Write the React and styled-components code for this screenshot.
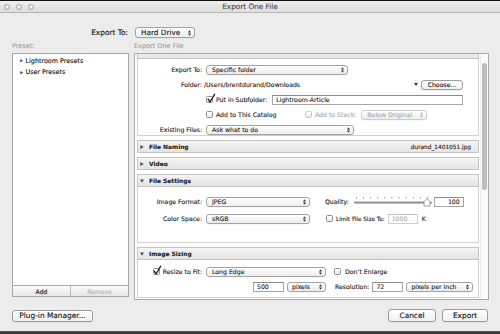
import React from 'react';
import styled, { createGlobalStyle } from 'styled-components';

const GlobalStyle = createGlobalStyle`
  html, body { margin: 0; padding: 0; width: 500px; height: 334px; overflow: hidden; background: #ececec; }
  body { font-family: "DejaVu Sans", Verdana, sans-serif; color: #1b1b1b; }
  * { box-sizing: border-box; }
`;

const Window = styled.div`
  width: 500px;
  height: 334px;
  display: flex;
  flex-direction: column;
  background: #ececec;
  -webkit-text-stroke: 0.12px currentColor;
`;

const TitleBar = styled.div`
  flex: none;
  height: 13px;
  display: grid;
  grid-template-columns: 1fr auto 1fr;
  align-items: center;
  border-top: 1px solid #111;
  border-bottom: 1px solid #b6b6b6;
  background: linear-gradient(#ededed, #dedede);
`;

const Lights = styled.div`
  display: flex;
  gap: 6px;
  padding-left: 4px;
`;

const Light = styled.span`
  width: 6px;
  height: 6px;
  border-radius: 50%;
  border: 1px solid #a8a8a8;
  background: radial-gradient(circle at 50% 40%, #fbfbfb, #d6d6d6);
`;

const Title = styled.div`
  font-size: 7.3px;
  color: #4d4d4d;
  white-space: nowrap;
`;

const DestRow = styled.div`
  flex: none;
  margin-top: 14px;
  height: 11px;
  display: grid;
  grid-template-columns: 117px auto;
  column-gap: 6px;
  padding-left: 12px;
  align-items: center;
`;

const DestLabel = styled.div`
  text-align: right;
  font-size: 7.4px;
  padding-right: 1px;
  color: #111;
`;

const Main = styled.div`
  flex: none;
  display: grid;
  grid-template-columns: 117px 355px;
  column-gap: 5px;
  padding-left: 12px;
`;

const Column = styled.div`
  display: flex;
  flex-direction: column;
`;

const PaneLabel = styled.div`
  margin-top: 4px;
  margin-bottom: 2px;
  height: 9px;
  line-height: 9px;
  font-size: 6.5px;
  color: #a3a3a3;
`;

const PresetList = styled.div`
  height: 233px;
  background: #fff;
  border: 1px solid #a7a7a7;
  padding: 1px 0 0 7px;
`;

const TreeItem = styled.div`
  height: 11.5px;
  display: flex;
  align-items: center;
  font-size: 6.4px;
  color: #111;
  gap: 2px;
`;

const ListButtons = styled.div`
  height: 11px;
  display: grid;
  grid-template-columns: 58px 1fr;
  border: 1px solid #a7a7a7;
  border-top: none;
`;

const ListBtn = styled.div`
  display: flex;
  align-items: center;
  justify-content: center;
  font-size: 6.1px;
  color: ${p => (p.$disabled ? '#b2b2b2' : '#111')};
  background: linear-gradient(#fbfbfb, #e7e7e7);
  border-right: ${p => (p.$first ? '1px solid #b8b8b8' : 'none')};
`;

const Panel = styled.div`
  height: 247px;
  display: flex;
  background: #fff;
  border: 1px solid #a9a9a9;
`;

const Scroller = styled.div`
  flex: 1;
  min-width: 0;
  display: flex;
  flex-direction: column;
  padding: 0 1px 0 2px;
  overflow: hidden;
`;

const ScrollTrack = styled.div`
  flex: none;
  width: 8px;
  border-left: 1px solid #ececec;
  background: #fafafa;
`;

const Thumb = styled.div`
  margin: 9px 0 0 1px;
  width: 5px;
  height: 127px;
  border-radius: 3px;
  background: #bdbdbd;
`;

const Remnant = styled.div`
  flex: none;
  height: 5px;
  border: 1px solid #c4c4c4;
  border-top: none;
  background: #e9e9e9;
`;

const SectionHeader = styled.div`
  flex: none;
  height: 13px;
  margin-top: 4px;
  display: flex;
  align-items: center;
  padding: 0 7px 0 2px;
  border: 1px solid #c4c4c4;
  background: linear-gradient(#f5f5f5, #e4e4e4);
  font-size: 5.9px;
  font-weight: bold;
  color: #222;
  gap: 5px;
`;

const HeaderAside = styled.span`
  margin-left: auto;
  font-weight: normal;
  font-size: 5.8px;
  color: #222;
`;

const SectionBody = styled.div`
  flex: none;
  display: flex;
  flex-direction: column;
  gap: ${p => p.$gap}px;
  padding: ${p => p.$pt}px 15px ${p => p.$pb}px 0;
  border: 1px solid #d2d2d2;
  border-top: none;
  background: #fff;
`;

const Row = styled.div`
  height: 11px;
  display: flex;
  align-items: center;
  font-size: 6.2px;
  white-space: nowrap;
`;

const Label = styled.div`
  flex: none;
  width: 64px;
  margin-right: 4px;
  display: flex;
  align-items: center;
  justify-content: flex-end;
  text-align: right;
`;

const Text = styled.span`
  flex: none;
  font-size: ${p => p.$size || 6.2}px;
  color: ${p => (p.$disabled ? '#a9a9a9' : '#1b1b1b')};
  margin-left: ${p => p.$ml || 0}px;
  margin-right: ${p => p.$mr || 0}px;
`;

const PopupBox = styled.div`
  flex: none;
  width: ${p => p.$w}px;
  height: ${p => p.$h || 10}px;
  margin-left: ${p => p.$ml || 0}px;
  display: flex;
  align-items: center;
  justify-content: space-between;
  padding: 0 3px 0 ${p => p.$pl || 5}px;
  border: 1px solid ${p => (p.$disabled ? '#cdcdcd' : '#a3a3a3')};
  border-radius: 3px;
  background: linear-gradient(#ffffff, #ededed);
  font-size: ${p => p.$size || 6.2}px;
  color: ${p => (p.$disabled ? '#ababab' : '#1b1b1b')};
  box-shadow: 0 0.5px 0 rgba(0, 0, 0, 0.06);
`;

const Field = styled.div`
  flex: ${p => (p.$grow ? 1 : 'none')};
  width: ${p => (p.$w ? `${p.$w}px` : 'auto')};
  height: 10px;
  margin-left: ${p => p.$ml || 0}px;
  display: flex;
  align-items: center;
  justify-content: ${p => (p.$right ? 'flex-end' : 'flex-start')};
  padding: 0 3px;
  background: #fff;
  border: 1px solid ${p => (p.$disabled ? '#d0d0d0' : '#a6a6a6')};
  border-top-color: ${p => (p.$disabled ? '#c4c4c4' : '#8c8c8c')};
  font-size: 6.2px;
  color: ${p => (p.$disabled ? '#b0b0b0' : '#1b1b1b')};
`;

const Button = styled.div`
  flex: none;
  width: ${p => p.$w}px;
  height: ${p => p.$h || 12}px;
  margin-left: ${p => p.$ml || 0}px;
  display: flex;
  align-items: center;
  justify-content: center;
  border: 1px solid #9d9d9d;
  border-radius: 3px;
  background: linear-gradient(#ffffff, #f0f0f0);
  box-shadow: 0 0.5px 0.5px rgba(0, 0, 0, 0.12);
  font-size: ${p => p.$size || 7.4}px;
  color: #111;
  white-space: nowrap;
`;

const Group = styled.div`
  flex: none;
  width: ${p => p.$w}px;
  margin-left: ${p => p.$ml || 0}px;
  display: flex;
  align-items: center;
  justify-content: ${p => (p.$end ? 'flex-end' : 'flex-start')};
  gap: ${p => p.$gap || 0}px;
`;

const BoxWrap = styled.span`
  position: relative;
  flex: none;
  width: 7px;
  height: 7px;
  margin-left: ${p => p.$ml || 0}px;
  margin-right: ${p => p.$mr ?? 3}px;
  border: 1px solid ${p => (p.$disabled ? '#cacaca' : '#8f8f8f')};
  border-radius: 1.5px;
  background: linear-gradient(#ffffff, #e8e8e8);
  svg { position: absolute; left: -0.5px; top: -3px; overflow: visible; }
`;

const Footer = styled.div`
  flex: none;
  margin-top: 9px;
  height: 13px;
  display: flex;
  align-items: center;
  padding: 0 12px;
`;

const Spacer = styled.div`
  flex: 1;
`;

const Desktop = styled.div`
  flex: none;
  margin-top: auto;
  height: 3px;
  background: linear-gradient(#5a5a5a, #262626);
`;

const SliderWrap = styled.svg`
  flex: none;
  margin-left: ${p => p.$ml}px;
  overflow: visible;
`;

const Arrows = ({ disabled }) => (
  <svg width="3" height="6" viewBox="0 0 3 6">
    <polygon points="0,2.4 1.5,0.2 3,2.4" fill={disabled ? '#b0b0b0' : '#333'} />
    <polygon points="0,3.6 1.5,5.8 3,3.6" fill={disabled ? '#b0b0b0' : '#333'} />
  </svg>
);

const Popup = ({ children, disabled, ...rest }) => (
  <PopupBox $disabled={disabled} {...rest}>
    <span>{children}</span>
    <Arrows disabled={disabled} />
  </PopupBox>
);

const Check = ({ checked, disabled, ml, mr }) => (
  <BoxWrap $disabled={disabled} $ml={ml} $mr={mr}>
    {checked && (
      <svg width="8" height="9" viewBox="0 0 8 9">
        <path d="M1.2 5.2 L3 8 L7.6 0.3" fill="none" stroke="#1e1e1e" strokeWidth="1.3" strokeLinecap="round" strokeLinejoin="round" />
      </svg>
    )}
  </BoxWrap>
);

const Disclosure = ({ open, color = '#4a4a4a', size = 4 }) => (
  <svg width={size} height={size} viewBox="0 0 4 4" style={{ flex: 'none' }}>
    {open ? <polygon points="0,0.4 4,0.4 2,3.8" fill={color} /> : <polygon points="0.3,0 3.8,2 0.3,4" fill={color} />}
  </svg>
);

const Slider = () => {
  const ticks = [];
  for (let i = 0; i < 11; i++) ticks.push(2 + i * 7.1);
  return (
    <SliderWrap $ml={5} width="78" height="11" viewBox="0 0 78 11">
      {ticks.map((x, i) => (
        <rect key={i} x={x} y="1" width="0.9" height="1.4" fill="#8a8a8a" />
      ))}
      <rect x="0" y="5.8" width="78" height="2" rx="1" fill="#a8a8a8" />
      <rect x="0" y="5.8" width="78" height="0.8" rx="0.4" fill="#7d7d7d" />
      <polygon points="70,10 70,5.5 73,2.5 76,5.5 76,10" fill="#fafafa" stroke="#8a8a8a" strokeWidth="0.8" />
    </SliderWrap>
  );
};

export default function App() {
  return (
    <>
      <GlobalStyle />
      <Window>
        <TitleBar>
          <Lights>
            <Light />
            <Light />
            <Light />
          </Lights>
          <Title>Export One File</Title>
          <div />
        </TitleBar>

        <DestRow>
          <DestLabel>Export To:</DestLabel>
          <Popup $w={60} $h={11} $size={7.3} $pl={5}>Hard Drive</Popup>
        </DestRow>

        <Main>
          <Column>
            <PaneLabel>Preset:</PaneLabel>
            <PresetList>
              <TreeItem>
                <Disclosure size={3.5} color="#555" />
                Lightroom Presets
              </TreeItem>
              <TreeItem>
                <Disclosure size={3.5} color="#555" />
                User Presets
              </TreeItem>
            </PresetList>
            <ListButtons>
              <ListBtn $first>Add</ListBtn>
              <ListBtn $disabled>Remove</ListBtn>
            </ListButtons>
          </Column>

          <Column>
            <PaneLabel>Export One File</PaneLabel>
            <Panel>
              <Scroller>
                <Remnant />
                <SectionBody $pt={5} $pb={0} $gap={4}>
                  <Row>
                    <Label>Export To:</Label>
                    <Popup $w={142}>Specific folder</Popup>
                  </Row>
                  <Row>
                    <Label>Folder:</Label>
                    <Text $ml={-2}>/Users/brentdurand/Downloads</Text>
                    <Spacer />
                    <svg width="4" height="3" viewBox="0 0 4 3" style={{ flex: 'none' }}>
                      <polygon points="0,0 4,0 2,3" fill="#333" />
                    </svg>
                    <Button $w={42} $h={10} $ml={3} $size={6.2}>Choose...</Button>
                  </Row>
                  <Row>
                    <Label />
                    <Check checked />
                    <Text>Put in Subfolder:</Text>
                    <Field $grow $ml={5}>Lightroom-Article</Field>
                  </Row>
                  <Row>
                    <Label />
                    <Group $w={99}>
                      <Check />
                      <Text>Add to This Catalog</Text>
                    </Group>
                    <Check disabled />
                    <Text $disabled>Add to Stack:</Text>
                    <Popup $w={66} $ml={5} disabled>Below Original</Popup>
                  </Row>
                  <Row>
                    <Label>Existing Files:</Label>
                    <Popup $w={148}>Ask what to do</Popup>
                  </Row>
                </SectionBody>

                <SectionHeader>
                  <Disclosure />
                  File Naming
                  <HeaderAside>durand_1401051.jpg</HeaderAside>
                </SectionHeader>
                <SectionHeader>
                  <Disclosure />
                  Video
                </SectionHeader>
                <SectionHeader>
                  <Disclosure open />
                  File Settings
                </SectionHeader>
                <SectionBody $pt={9} $pb={18} $gap={6}>
                  <Row>
                    <Label>Image Format:</Label>
                    <Popup $w={104}>JPEG</Popup>
                    <Text $ml={15}>Quality:</Text>
                    <Slider />
                    <Field $w={30} $ml={2} $right>100</Field>
                  </Row>
                  <Row>
                    <Label>Color Space:</Label>
                    <Popup $w={104}>sRGB</Popup>
                    <Check ml={16} />
                    <Text $size={5.7}>Limit File Size To:</Text>
                    <Field $w={30} $ml={3} $disabled>1000</Field>
                    <Text $ml={4}>K</Text>
                  </Row>
                </SectionBody>

                <SectionHeader>
                  <Disclosure open />
                  Image Sizing
                </SectionHeader>
                <SectionBody $pt={6} $pb={5} $gap={4}>
                  <Row>
                    <Label>
                      <Check checked />
                      Resize to Fit:
                    </Label>
                    <Popup $w={120}>Long Edge</Popup>
                    <Check ml={8} mr={4} />
                    <Text>Don’t Enlarge</Text>
                  </Row>
                  <Row>
                    <Label />
                    <Group $w={120} $end $gap={3}>
                      <Field $w={31}>500</Field>
                      <Popup $w={39} $pl={4}>pixels</Popup>
                    </Group>
                    <Text $ml={9}>Resolution:</Text>
                    <Field $w={31} $ml={3}>72</Field>
                    <Popup $w={67} $ml={3} $pl={4}>pixels per inch</Popup>
                  </Row>
                </SectionBody>
              </Scroller>
              <ScrollTrack>
                <Thumb />
              </ScrollTrack>
            </Panel>
          </Column>
        </Main>

        <Footer>
          <Button $w={81}>Plug-in Manager...</Button>
          <Spacer />
          <Button $w={48} $h={13}>Cancel</Button>
          <Button $w={46} $h={13} $ml={6}>Export</Button>
        </Footer>
        <Desktop />
      </Window>
    </>
  );
}
